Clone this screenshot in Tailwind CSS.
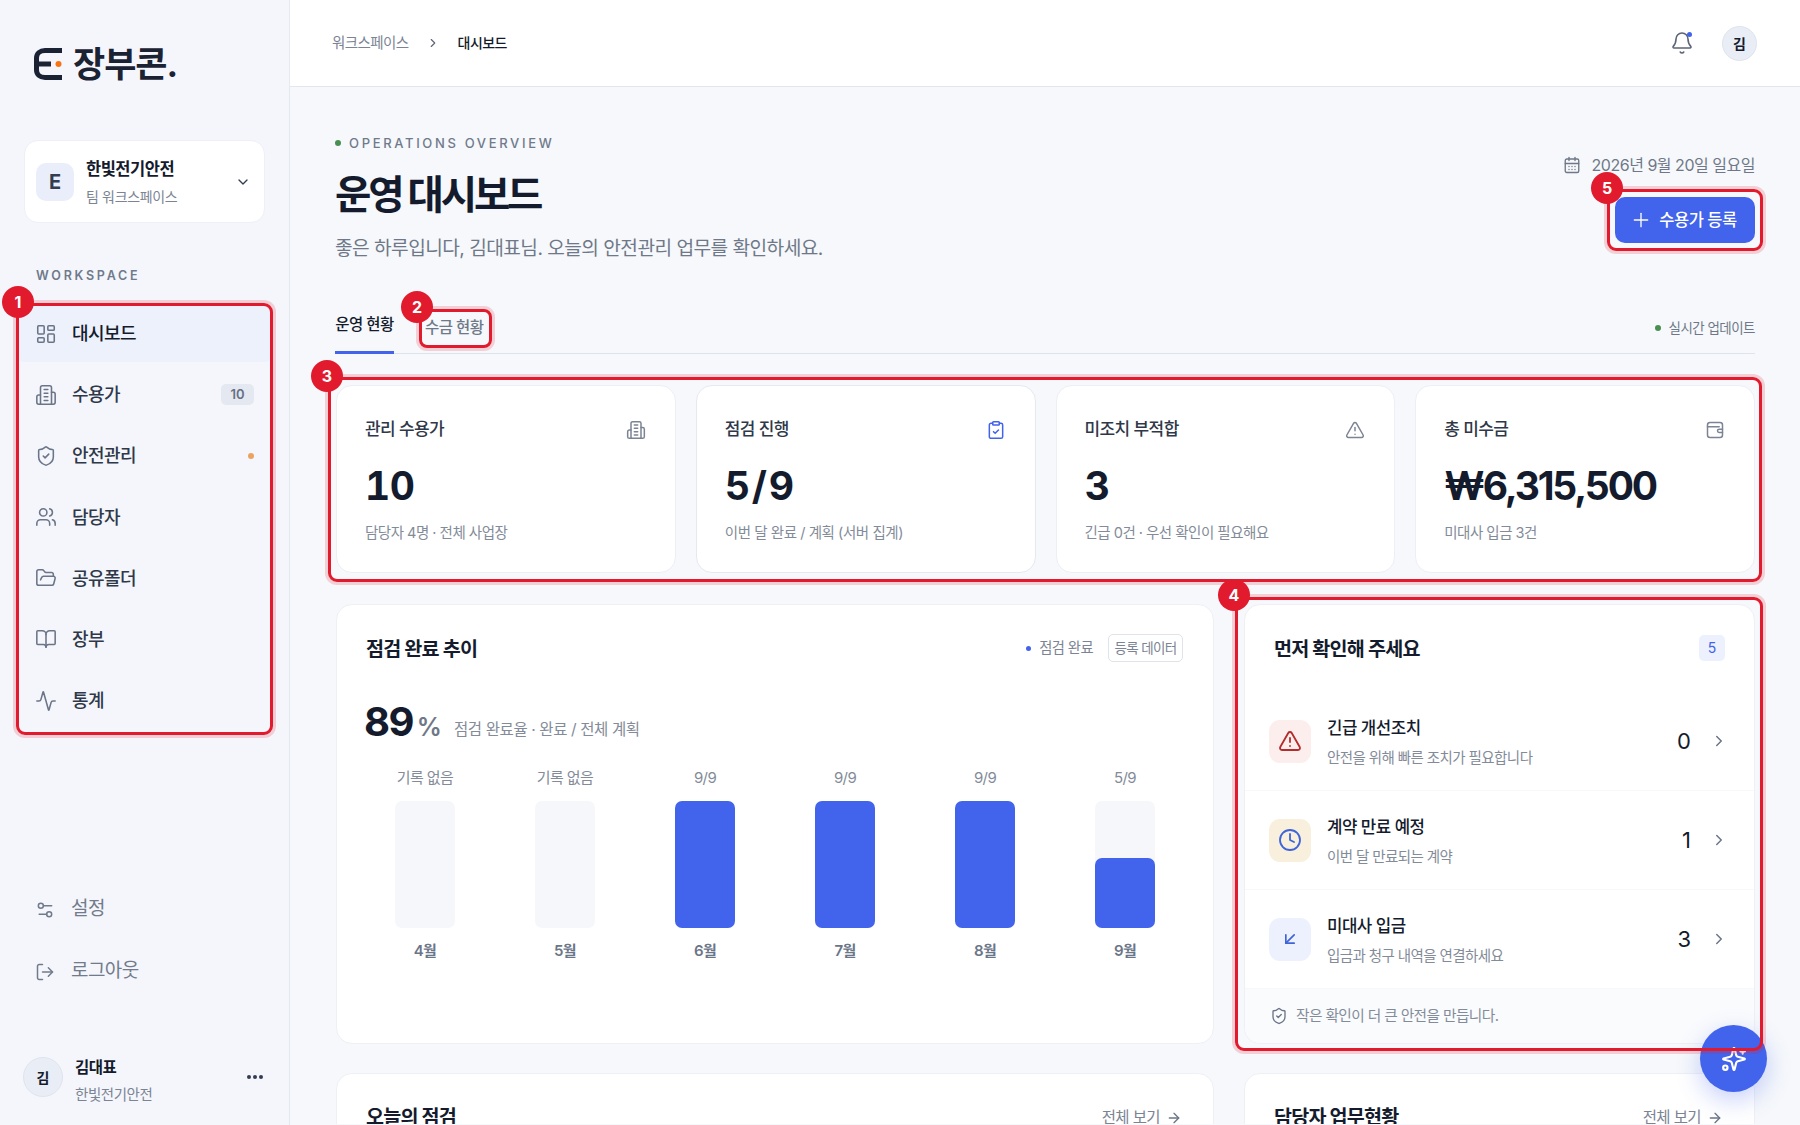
<!DOCTYPE html>
<html lang="ko">
<head>
    <meta charset="UTF-8">
    <meta name="viewport" content="width=device-width, initial-scale=1.0">
    <title>장부콘 운영 대시보드</title>
    <script src="https://cdn.jsdelivr.net/npm/@tailwindcss/browser@4"></script>
</head>
<body class="relative w-[1800px] h-[1125px] overflow-hidden flex bg-[#f6f8fb] text-[#141b2d] font-['Inter','Noto_Sans_CJK_KR',sans-serif]">

    <!-- Sidebar -->
    <aside class="w-[290px] h-full shrink-0 flex flex-col border-r border-[#e6e9f0] bg-[#f4f6fb]">
        <div class="flex items-center h-[32px] mt-[48px] ml-[34px] gap-[11px]">
            <svg class="w-[28px] h-[32px]" viewBox="0 0 28 32" fill="none" stroke="#1a2233" stroke-width="5">
                <path d="M28 2.5H11C6 2.5 2.5 5.5 2.5 10v12c0 4.500 3.500 7.500 8.500 7.500h17"/>
                <path d="M3 16h14"/>
                <circle cx="24.500" cy="16" r="3" fill="#f97316" stroke="none"/>
            </svg>
            <span class="text-[35px] leading-[32px] font-bold tracking-[-0.03em] text-[#1a2233]">장부콘.</span>
        </div>

        <div class="flex items-center w-[241px] h-[83px] mt-[60px] ml-[24px] pl-[11px] pr-[13px] rounded-[14px] bg-white border border-[#eef0f5]">
            <div class="flex items-center justify-center w-[38px] h-[38px] rounded-[10px] bg-[#e9eefa] text-[20px] font-bold text-[#333c50]">E</div>
            <div class="ml-[12px] flex-1">
                <p class="text-[16.5px] leading-[24px] font-bold tracking-[-0.03em]">한빛전기안전</p>
                <p class="mt-[6px] text-[14px] leading-[20px] text-[#7b8494] tracking-[-0.025em]">팀 워크스페이스</p>
            </div>
            <svg class="w-[16px] h-[16px]" viewBox="0 0 24 24" fill="none" stroke="#333c50" stroke-width="2" stroke-linecap="round" stroke-linejoin="round"><path d="m6 9 6 6 6-6"/></svg>
        </div>

        <p class="mt-[45px] ml-[36px] text-[12.5px] leading-[16px] font-semibold tracking-[0.22em] text-[#6f7a8c]">WORKSPACE</p>

        <nav class="mt-[21px] mx-[18px] flex flex-col gap-[4.2px] text-[18px] font-medium tracking-[-0.03em] text-[#2f3849]">
            <a class="flex items-center h-[57px] pl-[17px] pr-[17px] gap-[15px] bg-[#edf1fb] text-[#141b2d] rounded-[6px]">
                <svg class="w-[22px] h-[22px] shrink-0" viewBox="0 0 24 24" fill="none" stroke="#6b7588" stroke-width="1.7" stroke-linecap="round" stroke-linejoin="round"><rect x="3" y="3" width="7" height="9" rx="1"/><rect x="14" y="3" width="7" height="5" rx="1"/><rect x="14" y="12" width="7" height="9" rx="1"/><rect x="3" y="16" width="7" height="5" rx="1"/></svg>
                대시보드
            </a>
            <a class="flex items-center h-[57px] pl-[17px] pr-[17px] gap-[15px]">
                <svg class="w-[22px] h-[22px] shrink-0" viewBox="0 0 24 24" fill="none" stroke="#6b7588" stroke-width="1.7" stroke-linecap="round" stroke-linejoin="round"><path d="M6 22V4a2 2 0 0 1 2-2h8a2 2 0 0 1 2 2v18Z"/><path d="M6 12H4a2 2 0 0 0-2 2v6a2 2 0 0 0 2 2h2"/><path d="M18 9h2a2 2 0 0 1 2 2v9a2 2 0 0 1-2 2h-2"/><path d="M10 6h4"/><path d="M10 10h4"/><path d="M10 14h4"/><path d="M10 18h4"/></svg>
                수용가
                <span class="ml-auto flex items-center justify-center w-[33px] h-[21px] rounded-[5px] bg-[#e4e8f1] text-[13px] font-semibold tracking-normal text-[#667085]">10</span>
            </a>
            <a class="flex items-center h-[57px] pl-[17px] pr-[17px] gap-[15px]">
                <svg class="w-[22px] h-[22px] shrink-0" viewBox="0 0 24 24" fill="none" stroke="#6b7588" stroke-width="1.7" stroke-linecap="round" stroke-linejoin="round"><path d="M20 13c0 5-3.5 7.5-7.66 8.95a1 1 0 0 1-.67-.01C7.5 20.5 4 18 4 13V6a1 1 0 0 1 1-1c2 0 4.5-1.2 6.24-2.72a1.17 1.17 0 0 1 1.52 0C14.51 3.81 17 5 19 5a1 1 0 0 1 1 1z"/><path d="m9 12 2 2 4-4"/></svg>
                안전관리
                <span class="ml-auto w-[6px] h-[6px] rounded-full bg-[#eba35f]"></span>
            </a>
            <a class="flex items-center h-[57px] pl-[17px] pr-[17px] gap-[15px]">
                <svg class="w-[22px] h-[22px] shrink-0" viewBox="0 0 24 24" fill="none" stroke="#6b7588" stroke-width="1.7" stroke-linecap="round" stroke-linejoin="round"><path d="M16 21v-2a4 4 0 0 0-4-4H6a4 4 0 0 0-4 4v2"/><circle cx="9" cy="7" r="4"/><path d="M22 21v-2a4 4 0 0 0-3-3.87"/><path d="M16 3.13a4 4 0 0 1 0 7.75"/></svg>
                담당자
            </a>
            <a class="flex items-center h-[57px] pl-[17px] pr-[17px] gap-[15px]">
                <svg class="w-[22px] h-[22px] shrink-0" viewBox="0 0 24 24" fill="none" stroke="#6b7588" stroke-width="1.7" stroke-linecap="round" stroke-linejoin="round"><path d="m6 14 1.5-2.9A2 2 0 0 1 9.24 10H20a2 2 0 0 1 1.94 2.5l-1.54 6a2 2 0 0 1-1.95 1.5H4a2 2 0 0 1-2-2V5a2 2 0 0 1 2-2h3.9a2 2 0 0 1 1.69.9l.81 1.2a2 2 0 0 0 1.67.9H18a2 2 0 0 1 2 2v2"/></svg>
                공유폴더
            </a>
            <a class="flex items-center h-[57px] pl-[17px] pr-[17px] gap-[15px]">
                <svg class="w-[22px] h-[22px] shrink-0" viewBox="0 0 24 24" fill="none" stroke="#6b7588" stroke-width="1.7" stroke-linecap="round" stroke-linejoin="round"><path d="M12 7v14"/><path d="M3 18a1 1 0 0 1-1-1V4a1 1 0 0 1 1-1h5a4 4 0 0 1 4 4 4 4 0 0 1 4-4h5a1 1 0 0 1 1 1v13a1 1 0 0 1-1 1h-6a3 3 0 0 0-3 3 3 3 0 0 0-3-3z"/></svg>
                장부
            </a>
            <a class="flex items-center h-[57px] pl-[17px] pr-[17px] gap-[15px]">
                <svg class="w-[22px] h-[22px] shrink-0" viewBox="0 0 24 24" fill="none" stroke="#6b7588" stroke-width="1.7" stroke-linecap="round" stroke-linejoin="round"><path d="M22 12h-2.48a2 2 0 0 0-1.93 1.46l-2.35 8.36a.25.25 0 0 1-.48 0L9.24 2.18a.25.25 0 0 0-.48 0l-2.35 8.36A2 2 0 0 1 4.49 12H2"/></svg>
                통계
            </a>
        </nav>

        <div class="mt-auto mx-[18px] flex flex-col gap-[5px] text-[19px] tracking-[-0.03em] text-[#727b8b]">
            <a class="flex items-center h-[57px] pl-[17px] gap-[16px]">
                <svg class="w-[20px] h-[20px] shrink-0" viewBox="0 0 24 24" fill="none" stroke="#727b8b" stroke-width="1.8" stroke-linecap="round" stroke-linejoin="round"><path d="M20 7h-9"/><path d="M14 17H5"/><circle cx="17" cy="17" r="3"/><circle cx="7" cy="7" r="3"/></svg>
                설정
            </a>
            <a class="flex items-center h-[57px] pl-[17px] gap-[16px]">
                <svg class="w-[20px] h-[20px] shrink-0" viewBox="0 0 24 24" fill="none" stroke="#727b8b" stroke-width="1.8" stroke-linecap="round" stroke-linejoin="round"><path d="M9 21H5a2 2 0 0 1-2-2V5a2 2 0 0 1 2-2h4"/><polyline points="16 17 21 12 16 7"/><line x1="21" y1="12" x2="9" y2="12"/></svg>
                로그아웃
            </a>
        </div>

        <div class="flex items-center h-[84px] mt-[35px] mb-[6px] ml-[23px] mr-[25px]">
            <div class="flex items-center justify-center w-[40px] h-[40px] rounded-full bg-[#e9edf6] border border-[#e0e4ee] text-[14px] font-bold">김</div>
            <div class="ml-[12px] flex-1 pt-[8px]">
                <p class="text-[15.5px] leading-[22px] font-bold tracking-[-0.03em]">김대표</p>
                <p class="mt-[6px] text-[14.5px] leading-[20px] text-[#7b8494] tracking-[-0.03em]">한빛전기안전</p>
            </div>
            <svg class="w-[18px] h-[6px]" viewBox="0 0 18 6" fill="#333c50"><circle cx="3" cy="3" r="2"/><circle cx="9" cy="3" r="2"/><circle cx="15" cy="3" r="2"/></svg>
        </div>
    </aside>

    <!-- Main -->
    <main class="flex-1 h-full flex flex-col min-w-0">
        <header class="flex items-center h-[87px] shrink-0 pl-[42px] pr-[43px] bg-white border-b border-[#e3e6ec]">
            <span class="text-[14.5px] text-[#7b8494] tracking-[-0.04em]">워크스페이스</span>
            <svg class="w-[14px] h-[14px] ml-[17px] mr-[18px]" viewBox="0 0 24 24" fill="none" stroke="#5f6878" stroke-width="2" stroke-linecap="round" stroke-linejoin="round"><path d="m9 18 6-6-6-6"/></svg>
            <span class="text-[14px] font-medium tracking-[-0.04em] mb-[1px]">대시보드</span>
            <div class="ml-auto relative w-[24px] h-[24px] mr-[28px]">
                <svg class="w-[24px] h-[24px]" viewBox="0 0 24 24" fill="none" stroke="#5c6575" stroke-width="1.6" stroke-linecap="round" stroke-linejoin="round"><path d="M10.268 21a2 2 0 0 0 3.464 0"/><path d="M3.262 15.326A1 1 0 0 0 4 17h16a1 1 0 0 0 .74-1.673C19.41 13.956 18 12.499 18 8A6 6 0 0 0 6 8c0 4.499-1.411 5.956-2.738 7.326"/></svg>
                <span class="absolute top-[1px] right-[2px] w-[5px] h-[5px] rounded-full bg-[#4263eb]"></span>
            </div>
            <div class="flex items-center justify-center w-[35px] h-[35px] rounded-full bg-[#e9edf6] border border-[#e0e4ee] text-[14px] font-bold">김</div>
        </header>

        <div class="flex-1 min-h-0 pl-[46px] pr-[45px]">
            <div class="flex justify-between h-[156px]">
                <div class="ml-[-1px]">
                    <p class="flex items-center gap-[8px] mt-[47px] text-[13px] leading-[18px] font-medium tracking-[0.205em] text-[#6f7a8c]"><span class="w-[6px] h-[6px] rounded-full bg-[#4a8f52]"></span>OPERATIONS OVERVIEW</p>
                    <h1 class="mt-[17px] text-[39.500px] leading-[52px] font-bold tracking-[-0.08em] text-[#141b2d]">운영 대시보드</h1>
                    <p class="mt-[13px] text-[19.2px] leading-[28px] tracking-[-0.03em] text-[#6f7888]">좋은 하루입니다, 김대표님. 오늘의 안전관리 업무를 확인하세요.</p>
                </div>
                <div class="flex flex-col items-end">
                    <p class="flex items-center gap-[11px] mt-[66px] text-[16px] leading-[24px] tracking-[-0.03em] text-[#6f7888]">
                        <svg class="w-[18px] h-[18px]" viewBox="0 0 24 24" fill="none" stroke="#6f7888" stroke-width="1.8" stroke-linecap="round" stroke-linejoin="round"><path d="M8 2v4"/><path d="M16 2v4"/><rect x="3" y="4" width="18" height="18" rx="2"/><path d="M3 10h18"/><path d="M8 14h.01"/><path d="M12 14h.01"/><path d="M16 14h.01"/><path d="M8 18h.01"/><path d="M12 18h.01"/><path d="M16 18h.01"/></svg>
                        2026년 9월 20일 일요일
                    </p>
                    <button class="flex items-center justify-center gap-[10px] w-[140px] h-[46px] mt-[20px] rounded-[10px] bg-[#4263eb] text-[16.5px] font-medium tracking-[-0.03em] text-white">
                        <svg class="w-[16px] h-[16px]" viewBox="0 0 24 24" fill="none" stroke="white" stroke-width="2" stroke-linecap="round"><path d="M12 2v20"/><path d="M2 12h20"/></svg>
                        수용가 등록
                    </button>
                </div>
            </div>

            <div class="flex items-end h-[68px] mt-[43px] border-b border-[#dfe3ea] text-[15.5px] font-medium tracking-[-0.035em]">
                <div class="w-[59px] ml-[-1px] h-[45px] pb-[15px] flex items-end justify-center border-b-[3px] border-[#4263eb] mb-[-1px]">운영 현황</div>
                <div class="ml-[31px] pb-[14px] text-[#6f7888]">수금 현황</div>
                <div class="ml-auto flex items-center gap-[8px] pb-[15px] text-[13.5px] text-[#6f7888] font-normal tracking-[-0.04em]"><span class="w-[6px] h-[6px] rounded-full bg-[#4a8f52]"></span>실시간 업데이트</div>
            </div>

            <!-- KPI cards -->
            <div class="grid grid-cols-4 gap-[20px] mt-[31px]">
                <div class="h-[188px] pl-[28px] pr-[29px] pt-[32px] rounded-[16px] bg-white border border-[#eceff5]">
                    <div class="flex items-center justify-between h-[24px]">
                        <p class="text-[17px] font-medium tracking-[-0.035em] text-[#2f3849]">관리 수용가</p>
                        <svg class="w-[20px] h-[20px]" viewBox="0 0 24 24" fill="none" stroke="#7b8494" stroke-width="1.8" stroke-linecap="round" stroke-linejoin="round"><path d="M6 22V4a2 2 0 0 1 2-2h8a2 2 0 0 1 2 2v18Z"/><path d="M6 12H4a2 2 0 0 0-2 2v6a2 2 0 0 0 2 2h2"/><path d="M18 9h2a2 2 0 0 1 2 2v9a2 2 0 0 1-2 2h-2"/><path d="M10 6h4"/><path d="M10 10h4"/><path d="M10 14h4"/><path d="M10 18h4"/></svg>
                    </div>
                    <p class="mt-[20px] text-[39px] leading-[48px] font-bold tabular-nums tracking-[-0.01em]">10</p>
                    <p class="mt-[13px] text-[14.5px] leading-[20px] tracking-[-0.035em] text-[#838b99]">담당자 4명 · 전체 사업장</p>
                </div>
                <div class="h-[188px] pl-[28px] pr-[29px] pt-[32px] rounded-[16px] bg-white border border-[#e6e9f0]">
                    <div class="flex items-center justify-between h-[24px]">
                        <p class="text-[17px] font-medium tracking-[-0.035em] text-[#2f3849]">점검 진행</p>
                        <svg class="w-[20px] h-[20px]" viewBox="0 0 24 24" fill="none" stroke="#4263eb" stroke-width="1.8" stroke-linecap="round" stroke-linejoin="round"><rect x="8" y="2" width="8" height="4" rx="1"/><path d="M16 4h2a2 2 0 0 1 2 2v14a2 2 0 0 1-2 2H6a2 2 0 0 1-2-2V6a2 2 0 0 1 2-2h2"/><path d="m9 14 2 2 4-4"/></svg>
                    </div>
                    <p class="mt-[20px] text-[39px] leading-[48px] font-bold tracking-[0.05em]">5/9</p>
                    <p class="mt-[13px] text-[14.5px] leading-[20px] tracking-[-0.03em] text-[#838b99]">이번 달 완료 / 계획 (서버 집계)</p>
                </div>
                <div class="h-[188px] pl-[28px] pr-[29px] pt-[32px] rounded-[16px] bg-white border border-[#eceff5]">
                    <div class="flex items-center justify-between h-[24px]">
                        <p class="text-[17px] font-medium tracking-[-0.035em] text-[#2f3849]">미조치 부적합</p>
                        <svg class="w-[20px] h-[20px]" viewBox="0 0 24 24" fill="none" stroke="#7b8494" stroke-width="1.8" stroke-linecap="round" stroke-linejoin="round"><path d="m21.73 18-8-14a2 2 0 0 0-3.48 0l-8 14A2 2 0 0 0 4 21h16a2 2 0 0 0 1.73-3"/><path d="M12 9v4"/><path d="M12 17h.01"/></svg>
                    </div>
                    <p class="mt-[20px] text-[39px] leading-[48px] font-bold tracking-[-0.01em]">3</p>
                    <p class="mt-[13px] text-[14.5px] leading-[20px] tracking-[-0.035em] text-[#838b99]">긴급 0건 · 우선 확인이 필요해요</p>
                </div>
                <div class="h-[188px] pl-[28px] pr-[29px] pt-[32px] rounded-[16px] bg-white border border-[#eceff5]">
                    <div class="flex items-center justify-between h-[24px]">
                        <p class="text-[17px] font-medium tracking-[-0.035em] text-[#2f3849]">총 미수금</p>
                        <svg class="w-[20px] h-[20px]" viewBox="0 0 24 24" fill="none" stroke="#7b8494" stroke-width="1.8" stroke-linecap="round" stroke-linejoin="round"><rect x="3" y="3" width="18" height="18" rx="3"/><path d="M3 8h14"/><path d="M21 11h-4a1.5 1.5 0 0 0 0 4h4"/></svg>
                    </div>
                    <p class="mt-[20px] text-[39px] leading-[48px] font-bold tracking-[-0.055em]">₩6,315,500</p>
                    <p class="mt-[13px] text-[14.5px] leading-[20px] tracking-[-0.035em] text-[#838b99]">미대사 입금 3건</p>
                </div>
            </div>

            <!-- Chart + attention list -->
            <div class="flex gap-[30px] mt-[31px]">
                <section class="w-[878px] h-[440px] shrink-0 pl-[30px] pr-[30px] pt-[29px] rounded-[16px] bg-white border border-[#eef0f5]">
                    <div class="flex items-center h-[28px]">
                        <h2 class="ml-[-1px] text-[19.6px] font-bold tracking-[-0.04em] mt-[4px]">점검 완료 추이</h2>
                        <span class="ml-auto flex items-center gap-[8px] text-[14.3px] tracking-[-0.04em] text-[#7b8494]"><span class="w-[5px] h-[5px] rounded-full bg-[#4263eb]"></span>점검 완료</span>
                        <span class="flex items-center justify-center ml-[15px] w-[75px] h-[28px] rounded-[5px] border border-[#dfe3ea] text-[13.5px] tracking-[-0.05em] text-[#7b8494]">등록 데이터</span>
                    </div>
                    <div class="flex items-baseline mt-[36px] ml-[-3px] h-[48px]">
                        <span class="text-[40px] leading-[48px] font-bold tracking-[-0.04em]">89</span>
                        <span class="ml-[4px] text-[25px] font-semibold text-[#6f7888]">%</span>
                        <span class="ml-[12px] relative top-[-1px] text-[15.5px] tracking-[-0.025em] text-[#838b99]">점검 완료율 · 완료 / 전체 계획</span>
                    </div>
                    <div class="grid grid-cols-6 ml-[-12px] mr-[-12px] mt-[22px] text-center text-[15px] tracking-[-0.04em] text-[#838b99]">
                        <div class="flex flex-col items-center">
                            <p class="leading-[20px]">기록 없음</p>
                            <div class="w-[60px] h-[127px] mt-[13px] rounded-[7px] bg-[#f5f7fa]"></div>
                            <p class="mt-[13px] leading-[20px] font-semibold text-[#6b7588]">4월</p>
                        </div>
                        <div class="flex flex-col items-center">
                            <p class="leading-[20px]">기록 없음</p>
                            <div class="w-[60px] h-[127px] mt-[13px] rounded-[7px] bg-[#f5f7fa]"></div>
                            <p class="mt-[13px] leading-[20px] font-semibold text-[#6b7588]">5월</p>
                        </div>
                        <div class="flex flex-col items-center">
                            <p class="leading-[20px]">9/9</p>
                            <div class="w-[60px] h-[127px] mt-[13px] rounded-[7px] bg-[#4263eb]"></div>
                            <p class="mt-[13px] leading-[20px] font-semibold text-[#6b7588]">6월</p>
                        </div>
                        <div class="flex flex-col items-center">
                            <p class="leading-[20px]">9/9</p>
                            <div class="w-[60px] h-[127px] mt-[13px] rounded-[7px] bg-[#4263eb]"></div>
                            <p class="mt-[13px] leading-[20px] font-semibold text-[#6b7588]">7월</p>
                        </div>
                        <div class="flex flex-col items-center">
                            <p class="leading-[20px]">9/9</p>
                            <div class="w-[60px] h-[127px] mt-[13px] rounded-[7px] bg-[#4263eb]"></div>
                            <p class="mt-[13px] leading-[20px] font-semibold text-[#6b7588]">8월</p>
                        </div>
                        <div class="flex flex-col items-center">
                            <p class="leading-[20px]">5/9</p>
                            <div class="flex items-end w-[60px] h-[127px] mt-[13px] rounded-[7px] bg-[#f5f7fa]"><div class="w-full h-[70px] rounded-[7px] bg-[#4263eb]"></div></div>
                            <p class="mt-[13px] leading-[20px] font-semibold text-[#6b7588]">9월</p>
                        </div>
                    </div>
                </section>

                <section class="flex-1 h-[440px] flex flex-col rounded-[16px] bg-white border border-[#eef0f5] overflow-hidden">
                    <div class="flex items-center justify-between h-[87px] shrink-0 pl-[29px] pr-[29px]">
                        <h2 class="mt-[3px] text-[19.6px] font-bold tracking-[-0.04em]">먼저 확인해 주세요</h2>
                        <span class="mb-[2px] flex items-center justify-center w-[26px] h-[26px] rounded-[5px] bg-[#edf1fd] text-[14px] text-[#4263eb]">5</span>
                    </div>
                    <div class="flex items-center h-[99px] pl-[24px] pr-[26px] border-b border-[#f7f8fa]">
                        <div class="flex items-center justify-center w-[42px] h-[43px] rounded-[11px] bg-[#fbeeec]">
                            <svg class="w-[24px] h-[24px]" viewBox="0 0 24 24" fill="none" stroke="#b42c2c" stroke-width="1.8" stroke-linecap="round" stroke-linejoin="round"><path d="m21.73 18-8-14a2 2 0 0 0-3.48 0l-8 14A2 2 0 0 0 4 21h16a2 2 0 0 0 1.73-3"/><path d="M12 9v4"/><path d="M12 17h.01"/></svg>
                        </div>
                        <div class="ml-[16px] flex-1 mt-[2px]">
                            <p class="text-[16.8px] leading-[24px] font-medium tracking-[-0.03em]">긴급 개선조치</p>
                            <p class="mt-[8px] text-[14.5px] leading-[20px] tracking-[-0.04em] text-[#838b99]">안전을 위해 빠른 조치가 필요합니다</p>
                        </div>
                        <span class="text-[22px] font-normal">0</span>
                        <svg class="w-[18px] h-[18px] ml-[19px]" viewBox="0 0 24 24" fill="none" stroke="#6b7588" stroke-width="2" stroke-linecap="round" stroke-linejoin="round"><path d="m9 18 6-6-6-6"/></svg>
                    </div>
                    <div class="flex items-center h-[99px] pl-[24px] pr-[26px] border-b border-[#f7f8fa]">
                        <div class="flex items-center justify-center w-[42px] h-[43px] rounded-[11px] bg-[#f8efdc]">
                            <svg class="w-[24px] h-[24px]" viewBox="0 0 24 24" fill="none" stroke="#3f63d8" stroke-width="1.8" stroke-linecap="round" stroke-linejoin="round"><circle cx="12" cy="12" r="10"/><path d="M12 6v6l4 2"/></svg>
                        </div>
                        <div class="ml-[16px] flex-1 mt-[2px]">
                            <p class="text-[16.8px] leading-[24px] font-medium tracking-[-0.03em]">계약 만료 예정</p>
                            <p class="mt-[8px] text-[14.5px] leading-[20px] tracking-[-0.04em] text-[#838b99]">이번 달 만료되는 계약</p>
                        </div>
                        <span class="text-[22px] font-normal">1</span>
                        <svg class="w-[18px] h-[18px] ml-[19px]" viewBox="0 0 24 24" fill="none" stroke="#6b7588" stroke-width="2" stroke-linecap="round" stroke-linejoin="round"><path d="m9 18 6-6-6-6"/></svg>
                    </div>
                    <div class="flex items-center h-[98px] pl-[24px] pr-[26px]">
                        <div class="flex items-center justify-center w-[42px] h-[43px] rounded-[11px] bg-[#edf1fd]">
                            <svg class="w-[20px] h-[20px]" viewBox="0 0 24 24" fill="none" stroke="#3f63d8" stroke-width="2" stroke-linecap="round" stroke-linejoin="round"><path d="M17 7 7 17"/><path d="M17 17H7V7"/></svg>
                        </div>
                        <div class="ml-[16px] flex-1 mt-[2px]">
                            <p class="text-[16.8px] leading-[24px] font-medium tracking-[-0.03em]">미대사 입금</p>
                            <p class="mt-[8px] text-[14.5px] leading-[20px] tracking-[-0.04em] text-[#838b99]">입금과 청구 내역을 연결하세요</p>
                        </div>
                        <span class="text-[22px] font-normal">3</span>
                        <svg class="w-[18px] h-[18px] ml-[19px]" viewBox="0 0 24 24" fill="none" stroke="#6b7588" stroke-width="2" stroke-linecap="round" stroke-linejoin="round"><path d="m9 18 6-6-6-6"/></svg>
                    </div>
                    <div class="flex-1 flex items-center gap-[8px] pl-[25px] bg-[#fafbfd] border-t border-[#f7f8fa] text-[14.7px] tracking-[-0.04em] text-[#838b99]">
                        <svg class="w-[18px] h-[18px]" viewBox="0 0 24 24" fill="none" stroke="#6b7588" stroke-width="1.8" stroke-linecap="round" stroke-linejoin="round"><path d="M20 13c0 5-3.5 7.5-7.66 8.95a1 1 0 0 1-.67-.01C7.5 20.5 4 18 4 13V6a1 1 0 0 1 1-1c2 0 4.5-1.2 6.24-2.72a1.17 1.17 0 0 1 1.52 0C14.51 3.81 17 5 19 5a1 1 0 0 1 1 1z"/><path d="m9 12 2 2 4-4"/></svg>
                        작은 확인이 더 큰 안전을 만듭니다.
                    </div>
                </section>
            </div>

            <!-- Lower cards, cut off by the window -->
            <div class="flex gap-[30px] mt-[29px] h-[51px] overflow-hidden">
                <section class="w-[878px] h-[300px] shrink-0 flex items-start justify-between pl-[29px] pr-[31px] pt-[29px] rounded-[16px] bg-white border border-[#eef0f5]">
                    <h2 class="text-[19.6px] font-bold tracking-[-0.04em]">오늘의 점검</h2>
                    <a class="flex items-center gap-[6px] mt-[3px] text-[15.5px] tracking-[-0.04em] text-[#7b8494]">전체 보기
                        <svg class="w-[16px] h-[16px]" viewBox="0 0 24 24" fill="none" stroke="#6b7588" stroke-width="2" stroke-linecap="round" stroke-linejoin="round"><path d="M5 12h14"/><path d="m12 5 7 7-7 7"/></svg>
                    </a>
                </section>
                <section class="flex-1 h-[300px] flex items-start justify-between pl-[29px] pr-[31px] pt-[29px] rounded-[16px] bg-white border border-[#eef0f5]">
                    <h2 class="text-[19.6px] font-bold tracking-[-0.04em]">담당자 업무현황</h2>
                    <a class="flex items-center gap-[6px] mt-[3px] text-[15.5px] tracking-[-0.04em] text-[#7b8494]">전체 보기
                        <svg class="w-[16px] h-[16px]" viewBox="0 0 24 24" fill="none" stroke="#6b7588" stroke-width="2" stroke-linecap="round" stroke-linejoin="round"><path d="M5 12h14"/><path d="m12 5 7 7-7 7"/></svg>
                    </a>
                </section>
            </div>
        </div>
    </main>

    <!-- Floating button -->
    <button class="absolute left-[1700px] top-[1025px] flex items-center justify-center w-[67px] h-[67px] rounded-full bg-[#4263eb] shadow-[0_8px_24px_rgba(66,99,235,0.3)]">
        <svg class="w-[26px] h-[26px]" viewBox="0 0 24 24" fill="none" stroke="white" stroke-width="2" stroke-linecap="round" stroke-linejoin="round"><path d="M9.937 15.5A2 2 0 0 0 8.5 14.063l-6.135-1.582a.5.5 0 0 1 0-.962L8.5 9.936A2 2 0 0 0 9.937 8.5l1.582-6.135a.5.5 0 0 1 .963 0L14.063 8.5A2 2 0 0 0 15.5 9.937l6.135 1.581a.5.5 0 0 1 0 .964L15.5 14.063a2 2 0 0 0-1.437 1.437l-1.582 6.135a.5.5 0 0 1-.963 0z"/><path d="M20 3v4"/><path d="M22 5h-4"/><circle cx="4" cy="20" r="2"/></svg>
    </button>

    <!-- Annotation frames -->
    <div class="absolute left-[16px] top-[303px] w-[257px] h-[432px] rounded-[9px] border-[3.5px] border-[#e11b2d] shadow-[0_0_0_3px_rgba(225,27,45,0.18)]"></div>
    <div class="absolute left-[419px] top-[309px] w-[73px] h-[39px] rounded-[8px] border-[3.5px] border-[#e11b2d] shadow-[0_0_0_3px_rgba(225,27,45,0.18)]"></div>
    <div class="absolute left-[328px] top-[377px] w-[1434px] h-[205px] rounded-[9px] border-[3.5px] border-[#e11b2d] shadow-[0_0_0_3px_rgba(225,27,45,0.18)]"></div>
    <div class="absolute left-[1235px] top-[597px] w-[528px] h-[454px] rounded-[9px] border-[3.5px] border-[#e11b2d] shadow-[0_0_0_3px_rgba(225,27,45,0.18)]"></div>
    <div class="absolute left-[1607px] top-[189px] w-[156px] h-[62px] rounded-[9px] border-[3.5px] border-[#e11b2d] shadow-[0_0_0_3px_rgba(225,27,45,0.18)]"></div>

    <div class="absolute left-[2px] top-[286px] flex items-center justify-center w-[32px] h-[32px] rounded-full bg-[#e11b2d] text-[16px] font-bold text-white">1</div>
    <div class="absolute left-[401px] top-[291px] flex items-center justify-center w-[32px] h-[32px] rounded-full bg-[#e11b2d] text-[16px] font-bold text-white">2</div>
    <div class="absolute left-[311px] top-[360px] flex items-center justify-center w-[32px] h-[32px] rounded-full bg-[#e11b2d] text-[16px] font-bold text-white">3</div>
    <div class="absolute left-[1218px] top-[579px] flex items-center justify-center w-[32px] h-[32px] rounded-full bg-[#e11b2d] text-[16px] font-bold text-white">4</div>
    <div class="absolute left-[1591px] top-[172px] flex items-center justify-center w-[32px] h-[32px] rounded-full bg-[#e11b2d] text-[16px] font-bold text-white">5</div>
</body>
</html>
